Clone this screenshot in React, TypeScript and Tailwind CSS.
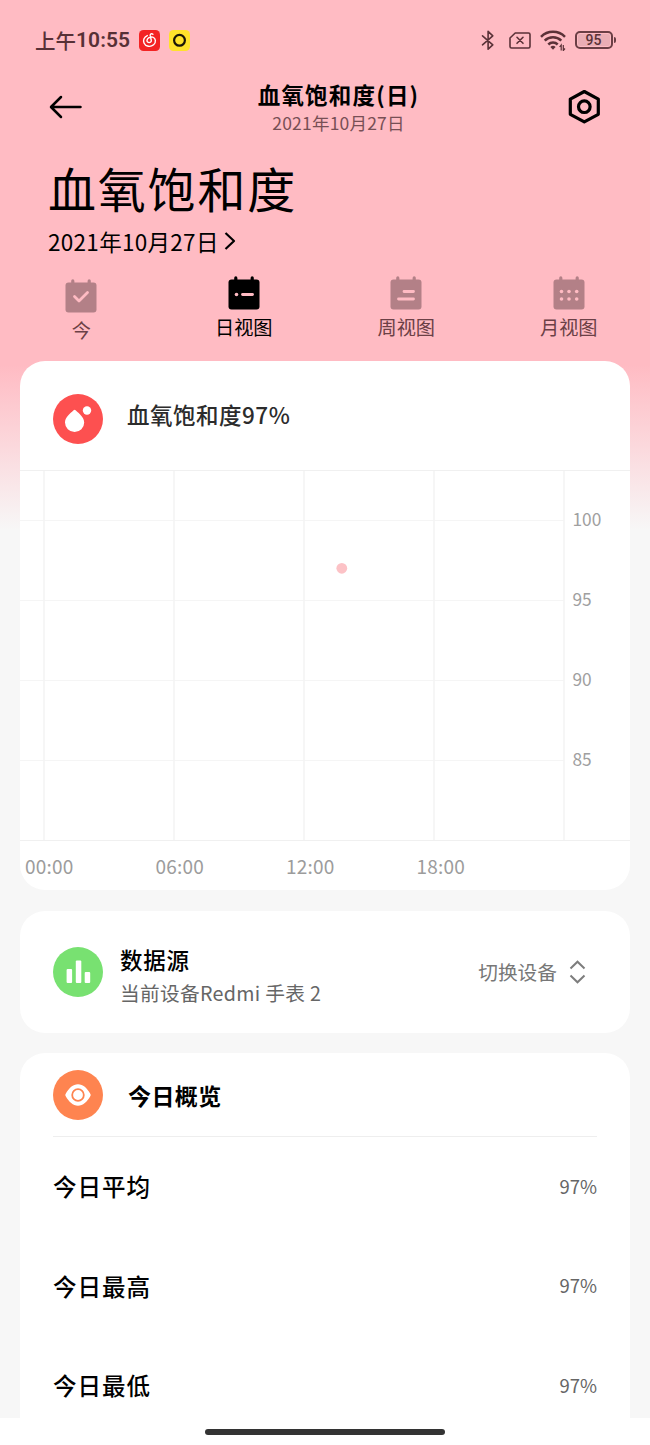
import type { ReactNode } from "react";

const calendarTabs = [
  { label: "今", kind: "today", active: false },
  { label: "日视图", kind: "day", active: true },
  { label: "周视图", kind: "week", active: false },
  { label: "月视图", kind: "month", active: false },
];

const yLabels = ["100", "95", "90", "85"];
const xLabels = ["00:00", "06:00", "12:00", "18:00"];

const summary = [
  { label: "今日平均", value: "97%" },
  { label: "今日最高", value: "97%" },
  { label: "今日最低", value: "97%" },
];

function StatusBar() {
  return (
    <div className="flex h-20 items-center pl-[35px] pr-[34px] text-[#5b3238]">
      <span className="flex items-center text-[20.5px] font-medium leading-none text-[#573036]">
        上午
        <span className="font-['Roboto'] text-[21px] font-semibold tracking-[0.1px]">10:55</span>
      </span>
      <svg className="ml-[9px] size-[21px]" viewBox="0 0 21 21" fill="none">
        <rect width="21" height="21" rx="4.5" fill="#f32323" />
        <path
          d="M8.3 5.6C5 7 3.9 10.300 5 13c1.500 3.600 6.500 4.500 9.600 1.800 2.800-2.500 2.200-6.600-.8-7.600-2.800-.8-5.600.8-5.800 3.200-.1 3 4.400 3 4.300 0L11.200 5.700c-.2-1.700 1.400-2.500 2.700-1.400"
          stroke="#fff"
          strokeWidth="1.4"
          strokeLinecap="round"
        />
      </svg>
      <svg className="ml-[9px] size-[21px]" viewBox="0 0 21 21" fill="none">
        <rect width="21" height="21" rx="4.5" fill="#ffe22b" />
        <circle cx="10.5" cy="10.3" r="5.4" stroke="#1a1608" strokeWidth="2.2" />
      </svg>

      <div className="ml-auto flex items-center">
        <svg className="h-[21px] w-[14px]" viewBox="0 0 14 21" fill="none" stroke="currentColor" strokeWidth="1.6" strokeLinejoin="round" strokeLinecap="round">
          <path d="M1.5 5.8l10.3 9-4.7 4.4V1.3l4.7 4.5-10.3 9" />
        </svg>
        <svg className="ml-[14px] h-[17px] w-[22px]" viewBox="0 0 22 17" fill="none" stroke="currentColor" strokeWidth="1.6" strokeLinecap="round" strokeLinejoin="round">
          <path d="M6.2 1H19.5a1.5 1.5 0 0 1 1.5 1.5v12a1.5 1.5 0 0 1-1.5 1.5H2.5A1.5 1.5 0 0 1 1 14.5V6z" />
          <path d="M8 5.3l6 6M14 5.3l-6 6" />
        </svg>
        <svg className="ml-[9px] h-[21px] w-[26px]" viewBox="0 0 26 21" fill="none" stroke="currentColor" strokeWidth="2.5">
          <path d="M1 6.8a17 17 0 0 1 24 0M4.7 10.7a12 12 0 0 1 16.6 0M8.3 14.5a6.7 6.7 0 0 1 9.4 0" />
          <path d="M10.4 17.1a3.6 3.6 0 0 1 5.2 0L13 19.7z" fill="currentColor" stroke="none" />
          <path d="M21.2 20.5v-5.5l-1.6 2M23.3 15v5.5l1.7-2" strokeWidth="1.2" />
        </svg>
        <div className="ml-[9px] flex h-[18px] w-[38px] items-center justify-center rounded-[5px] border-2 border-[#6b3e45] p-px">
          <span className="flex h-full w-full items-center justify-center rounded-[2px] bg-[#eaadb5] font-['Roboto'] text-[14px] font-medium leading-none">
            95
          </span>
        </div>
        <span className="ml-[1px] h-[6px] w-[2.5px] rounded-r-sm bg-[#6b3e45]" />
      </div>
    </div>
  );
}

function AppBar() {
  return (
    <div className="flex h-[54px] items-center justify-between px-[49px]">
      <svg className="h-[24px] w-[34px]" viewBox="0 0 34 24" fill="none" stroke="#000" strokeWidth="2.5" strokeLinecap="round" strokeLinejoin="round">
        <path d="M31.5 12H2.5M12 2L2 12l10 10" />
      </svg>
      <div className="flex flex-col items-center pl-[27px] pt-[2px]">
        <h1 className="text-[22.5px] font-bold leading-[29px] tracking-[1.2px] text-black">血氧饱和度(日)</h1>
        <p className="text-[17.5px] leading-[27px] tracking-[0.2px] text-[#784f55]">2021年10月27日</p>
      </div>
      <svg className="h-[36px] w-[34px]" viewBox="0 0 34 36" fill="none" stroke="#000" strokeLinejoin="round">
        <path d="M17.3 2.5L31.3 10.1V25.3L17.3 32.9L3.3 25.3V10.1z" strokeWidth="3.2" />
        <circle cx="17.3" cy="17.7" r="5.8" strokeWidth="3.2" />
      </svg>
    </div>
  );
}

function CalendarIcon({ kind, active }: { kind: string; active: boolean }) {
  return (
    <svg className="h-[34px] w-8" viewBox="0 0 32 34" fill="none">
      <g fill={active ? "#000" : "#b38087"}>
        <rect x="0.5" y="3.5" width="31" height="30" rx="3" />
        <rect x="6.2" y="0.3" width="3.2" height="6" rx="1.6" />
        <rect x="22.6" y="0.3" width="3.2" height="6" rx="1.6" />
      </g>
      <g stroke="#ffbbc3" fill="#ffbbc3" strokeWidth="2.8" strokeLinecap="round" strokeLinejoin="round">
        {kind === "today" && <path d="M9.5 17.5l4.5 4.5 8.5-8.5" fill="none" />}
        {kind === "day" && (
          <>
            <circle cx="8.5" cy="18.5" r="1.8" stroke="none" />
            <path d="M14.5 18.5h10" />
          </>
        )}
        {kind === "week" && <path d="M14 15.5h9.5M8.5 23h15" />}
        {kind === "month" &&
          [15.5, 23].map((y) =>
            [8.5, 16, 23.7].map((x) => <circle key={`${x}-${y}`} cx={x} cy={y} r="1.8" stroke="none" />),
          )}
      </g>
    </svg>
  );
}

function Badge({ className, children }: { className: string; children: ReactNode }) {
  return (
    <div className={`size-[50px] shrink-0 overflow-hidden rounded-full ${className}`}>
      <svg className="size-full" viewBox="0 0 50 50" fill="#fff">
        {children}
      </svg>
    </div>
  );
}

function ChartCard() {
  return (
    <section className="h-[529px] overflow-hidden rounded-[25px] bg-white">
      <div className="flex h-[109px] items-center pl-[33px] pt-[6px]">
        <Badge className="bg-[#fd5050]">
          <path d="M20.6 16.3q1-.9 2 0c4.2 3.7 8.6 7.500 8.6 12.300a9.600 9.400 0 0 1-19.200 0c0-4.800 4.400-8.600 8.600-12.300z" />
          <circle cx="34" cy="16.5" r="4.2" />
        </Badge>
        <h3 className="ml-6 pb-[9px] text-[22.5px] font-medium leading-8 tracking-[0.5px] text-[#2c2c2c]">
          血氧饱和度97%
        </h3>
      </div>

      <div className="flex h-[371px] border-y border-[#f0f0f0]">
        <svg className="h-[369px] w-[545px]" viewBox="0 0 545 369" fill="none">
          <path d="M0 49.5H544M0 129.5H544M0 209.5H544M0 289.5H544" stroke="#f5f5f5" />
          <path d="M24 0V369M154 0V369M284 0V369M414 0V369M544 0V369" stroke="#f4f4f4" strokeWidth="1.6" />
          <circle cx="321.8" cy="97.3" r="5.4" fill="#fcc2c6" />
        </svg>
        <div className="flex flex-col pl-[7.5px] pt-[8px] text-[17.3px] text-[#a0a0a0]">
          {yLabels.map((label) => (
            <span key={label} className="h-20 leading-[80px]">
              {label}
            </span>
          ))}
        </div>
      </div>

      <div className="flex pl-[5px] text-[19px] leading-[49px] tracking-[0.2px] text-[#9c9c9c]">
        {xLabels.map((label) => (
          <span key={label} className="w-[130.5px]">
            {label}
          </span>
        ))}
      </div>
    </section>
  );
}

function DeviceCard() {
  return (
    <section className="mt-[21px] flex h-[122px] items-center rounded-[25px] bg-white pl-[33px] pr-[44px]">
      <Badge className="bg-[#78e171]">
        <rect x="13.6" y="22" width="5.5" height="14" rx="1" />
        <rect x="22.8" y="13.5" width="5.5" height="22.5" rx="1" />
        <rect x="31.7" y="25" width="5.5" height="11" rx="1" />
      </Badge>
      <div className="ml-[17px] pt-[7px]">
        <h3 className="text-[22.5px] font-medium leading-[34px] tracking-[0.7px] text-black">数据源</h3>
        <p className="text-[19.7px] leading-[34px] tracking-[0.3px] text-[#666]">当前设备Redmi 手表 2</p>
      </div>
      <span className="ml-auto text-[19.7px] text-[#777]">切换设备</span>
      <svg className="ml-3 h-[24px] w-[17px]" viewBox="0 0 17 24" fill="none" stroke="#7d7d7d" strokeWidth="2">
        <path d="M1.5 8.5l7-6.8 7 6.8M1.5 15.5l7 6.8 7-6.8" />
      </svg>
    </section>
  );
}

function OverviewCard() {
  return (
    <section className="mt-5 h-[365px] rounded-t-[25px] bg-white px-[33px]">
      <div className="flex h-[84px] items-center border-b border-[#eeeeee]">
        <Badge className="bg-[#fe8450]">
          <path d="M12.6 26q-.7-1 0-2C16 18 20 14.3 25 14.3S34 18 37.4 24q.7 1 0 2C34 32 30 35.7 25 35.7S16 32 12.6 26z" />
          <circle cx="25" cy="25" r="5.8" fill="none" stroke="#fe8450" strokeWidth="1.8" />
        </Badge>
        <h3 className="ml-[25px] pt-[1px] text-[23px] font-bold leading-8 tracking-[0.4px] text-black">今日概览</h3>
      </div>
      {summary.map((row) => (
        <div key={row.label} className="flex h-[99.5px] items-center justify-between">
          <span className="text-[23.5px] font-medium tracking-[1px] text-black">{row.label}</span>
          <span className="text-[18.5px] text-[#666]">{row.value}</span>
        </div>
      ))}
    </section>
  );
}

export default function App() {
  return (
    <div className="h-[1445px] w-[650px] overflow-hidden bg-[#f7f7f7] bg-[linear-gradient(to_bottom,#ffbbc3_0px,#ffbbc3_365px,#f7f7f7_530px)] font-['Noto_Sans_CJK_SC',sans-serif]">
      <StatusBar />
      <AppBar />

      <div className="h-[142px] pl-[48px] pt-[18px] text-black">
        <h2 className="text-[48px] leading-[70px] tracking-[1.8px]">血氧饱和度</h2>
        <div className="flex items-center pt-[1px]">
          <span className="text-[22.5px] leading-[36px] tracking-[0.3px]">2021年10月27日</span>
          <svg className="ml-[5px] h-5 w-3" viewBox="0 0 12 20" fill="none" stroke="#000" strokeWidth="2.2" strokeLinejoin="round">
            <path d="M1.5 2l8.5 8-8.5 8" />
          </svg>
        </div>
      </div>

      <nav className="grid h-[85px] grid-cols-4">
        {calendarTabs.map((tab) => (
          <div
            key={tab.kind}
            className={`flex flex-col items-center ${tab.kind === "today" ? "pt-[3px]" : ""} ${tab.active ? "text-black" : "text-[#6b4046]"}`}
          >
            <CalendarIcon kind={tab.kind} active={tab.active} />
            <span className="text-[19.2px] leading-[34px]">{tab.label}</span>
          </div>
        ))}
      </nav>

      <main className="px-5">
        <ChartCard />
        <DeviceCard />
        <OverviewCard />
      </main>

      {/* gesture bar */}
      <div className="flex h-[27px] justify-center bg-white pt-[10.5px]">
        <div className="h-[6px] w-60 rounded-full bg-[#333]" />
      </div>
    </div>
  );
}
